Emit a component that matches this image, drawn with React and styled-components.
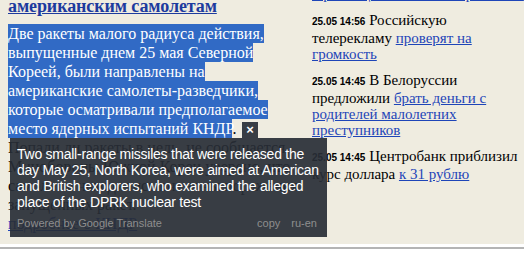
import React from "react";
import styled, { createGlobalStyle } from "styled-components";

const GlobalStyle = createGlobalStyle`
  html, body { margin: 0; padding: 0; background: #fff; }
  body { width: 524px; height: 268px; overflow: hidden; }
`;

const Page = styled.div`
  position: relative;
  width: 524px;
  height: 268px;
  overflow: hidden;
  background: #fff;
  font-family: "Liberation Serif", "Times New Roman", serif;
  color: #000;
`;

const Content = styled.div`
  display: flex;
  gap: 37px;
  padding-left: 8px;
  height: 244px;
  overflow: hidden;
  background: #efece0;
`;

const Divider = styled.div`
  margin-top: 3px;
  height: 2px;
  background: #b4b4b4;
`;

const Article = styled.div`
  width: 267px;
  flex: none;
`;

const Headline = styled.h2`
  margin: -5px 0 7px;
  font-size: 18px;
  line-height: 22px;
  letter-spacing: -0.1px;
  font-weight: bold;
  white-space: nowrap;
  a { color: #1d3b9e; text-decoration: underline; }
`;

const Para = styled.p`
  margin: 0;
  font-size: 16px;
  line-height: 19px;
  white-space: nowrap;
`;

const Selected = styled.span`
  background: #316ac5;
  color: #fff;
  padding: 1px 0;
`;

const Link = styled.a`
  color: #1e45b8;
  text-decoration: underline;
`;

const Feed = styled.div`
  flex: 1;
  margin-top: -14px;
`;

const Item = styled.div`
  font-size: 15px;
  line-height: 16px;
  margin-bottom: 10px;
  white-space: nowrap;
`;

const Time = styled.span`
  font-family: "Liberation Sans", Arial, sans-serif;
  font-weight: bold;
  font-size: 10px;
`;

const Popup = styled.div`
  position: absolute;
  left: 10px;
  top: 138px;
  width: 317px;
  height: 99px;
  box-sizing: border-box;
  padding: 8px 10px 0 7px;
  background: rgba(40, 46, 54, 0.92);
  color: #fff;
  font-family: "Liberation Sans", Arial, sans-serif;
  font-size: 14px;
  line-height: 16px;
`;

const Translation = styled.div`
  white-space: nowrap;
  letter-spacing: -0.25px;
`;

const Footer = styled.div`
  display: flex;
  margin-top: 7px;
  font-size: 11px;
  line-height: 13px;
  color: #8e8e8e;
`;

const Brand = styled.span`
  flex: 1;
`;

const Actions = styled.div`
  display: flex;
  gap: 11px;
`;

const Close = styled.button`
  position: absolute;
  left: 242px;
  top: 122px;
  width: 16px;
  height: 16px;
  padding: 0;
  border: none;
  background: rgba(40, 46, 54, 0.92);
  color: #fff;
  font-family: "Liberation Sans", Arial, sans-serif;
  font-weight: bold;
  font-size: 13px;
  line-height: 16px;
  text-align: center;
`;

const feed = [
  { time: "25.05 14:56", lines: [["Российскую"], ["телерекламу ", "проверят на"], [null, "громкость"]] },
  { time: "25.05 14:45", lines: [["В Белоруссии"], ["предложили ", "брать деньги с"], [null, "родителей малолетних"], [null, "преступников"]] },
  { time: "25.05 14:45", lines: [["Центробанк приблизил"], ["курс доллара ", "к 31 рублю"]] },
];

export default function App() {
  return (
    <Page>
      <GlobalStyle />
      <Content>
        <Article>
          <Headline>
            <a href="#">американским самолетам</a>
          </Headline>
          <Para>
            <Selected>Две ракеты малого радиуса действия,</Selected>
            <br />
            <Selected>выпущенные днем 25 мая Северной</Selected>
            <br />
            <Selected>Кореей, были направлены на</Selected>
            <br />
            <Selected>американские самолеты-разведчики,</Selected>
            <br />
            <Selected>которые осматривали предполагаемое</Selected>
            <br />
            <Selected>место ядерных испытаний КНДР</Selected>.
          </Para>
          <Para>
            Попали ли ракеты в цель, не сообщается.
            <br />
            Минобороны Южной Кореи уверено, что
            <br />
            самолеты находились вне зоны поражения
            <br />
            запущенных ракет.
            <br />
            <Link href="#">подробнее о КНДР</Link>
          </Para>
        </Article>
        <Feed>
          <Item>
            <Link href="#">о росте цен на бензин в регионах</Link>
          </Item>
          {feed.map((it, i) => (
            <Item key={i}>
              {it.lines.map((ln, j) => (
                <React.Fragment key={j}>
                  {j === 0 && <Time>{it.time}</Time>}
                  {j === 0 && " "}
                  {ln[0]}
                  {ln[1] && <Link href="#">{ln[1]}</Link>}
                  {j < it.lines.length - 1 && <br />}
                </React.Fragment>
              ))}
            </Item>
          ))}
        </Feed>
      </Content>
      <Divider />
      <Close aria-label="close">×</Close>
      <Popup>
        <Translation>
          Two small-range missiles that were released the
          <br />
          day May 25, North Korea, were aimed at American
          <br />
          and British explorers, who examined the alleged
          <br />
          place of the DPRK nuclear test
        </Translation>
        <Footer>
          <Brand>Powered by Google Translate</Brand>
          <Actions>
            <span>copy</span>
            <span>ru-en</span>
          </Actions>
        </Footer>
      </Popup>
    </Page>
  );
}
